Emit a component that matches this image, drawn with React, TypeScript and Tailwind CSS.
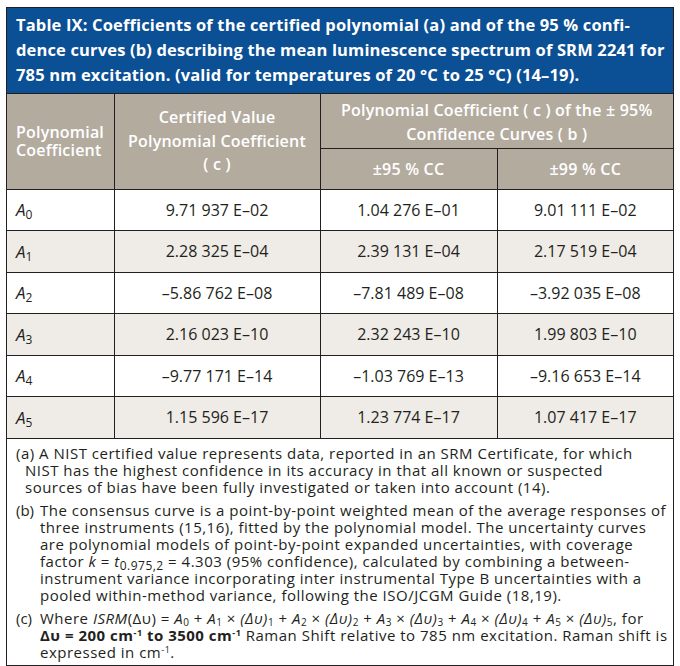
import React from 'react';

const rows = [
  { k: '0', a: '9.71 937 E–02', b: '1.04 276 E–01', c: '9.01 111 E–02' },
  { k: '1', a: '2.28 325 E–04', b: '2.39 131 E–04', c: '2.17 519 E–04' },
  { k: '2', a: '–5.86 762 E–08', b: '–7.81 489 E–08', c: '–3.92 035 E–08' },
  { k: '3', a: '2.16 023 E–10', b: '2.32 243 E–10', c: '1.99 803 E–10' },
  { k: '4', a: '–9.77 171 E–14', b: '–1.03 769 E–13', c: '–9.16 653 E–14' },
  { k: '5', a: '1.15 596 E–17', b: '1.23 774 E–17', c: '1.07 417 E–17' },
];

function Term({ n, last }: { n: number; last?: boolean }) {
  return (
    <>
      {' + '}
      <i>A</i>
      <sub className="text-[10px]">{n}</sub> × <i>(Δυ)</i>
      <sub className="text-[10px]">{n}</sub>
      {last ? ', ' : ''}
    </>
  );
}

export default function App() {
  return (
    <div className="bg-white w-[680px] h-[666px] pt-[7px] pl-[6px]" style={{ fontFamily: '"Open Sans", "Noto Sans", sans-serif' }}>
      <div className="w-[668px] border border-[#231f20] text-[#231f20]">
        <div className="bg-[#0b4f94] text-white font-bold text-[16.5px] tracking-[0.15px] leading-[25px] px-[9px] pt-[4px] h-[86px] whitespace-nowrap border-b border-[#231f20]">
          Table IX: Coefficients of the certified polynomial (a) and of the 95 % confi-<br />
          dence curves (b) describing the mean luminescence spectrum of SRM 2241 for<br />
          785 nm excitation. (valid for temperatures of 20 °C to 25 °C) (14–19).
        </div>

        <table className="w-full table-fixed border-collapse">
          <colgroup>
            <col className="w-[107px]" />
            <col className="w-[206px]" />
            <col className="w-[177px]" />
            <col />
          </colgroup>
          <thead className="bg-[#b4ab9f] text-white text-[16px] tracking-[0.2px]">
            <tr className="h-[54px]">
              <th rowSpan={2} className="text-left pl-[9px] leading-[18px] font-semibold border-r border-b border-[#231f20]">
                Polynomial<br />Coefficient
              </th>
              <th rowSpan={2} className="leading-[23.5px] font-semibold border-r border-b border-[#231f20]">
                Certified Value<br />Polynomial Coefficient<br />( c )
              </th>
              <th colSpan={2} className="leading-[24px] font-semibold border-b border-[#231f20] pt-[2px]">
                Polynomial Coefficient ( c ) of the ± 95%<br />Confidence Curves ( b )
              </th>
            </tr>
            <tr className="h-[41px]">
              <th className="font-semibold border-r border-b border-[#231f20]">±95 % CC</th>
              <th className="font-semibold border-b border-[#231f20]">±99 % CC</th>
            </tr>
          </thead>
          <tbody className="text-[16px]">
            {rows.map((r, i) => (
              <tr key={r.k} className={`h-[41.5px] ${i % 2 === 1 ? 'bg-[#efebe6]' : 'bg-white'}`}>
                <td className="pl-[9px] border-r border-b border-[#231f20]">
                  <i className="text-[17px]">A</i>
                  <sub className="text-[12px]">{r.k}</sub>
                </td>
                <td className="text-center border-r border-b border-[#231f20]">{r.a}</td>
                <td className="text-center border-r border-b border-[#231f20]">{r.b}</td>
                <td className="text-center border-b border-[#231f20]">{r.c}</td>
              </tr>
            ))}
          </tbody>
        </table>

        <div className="px-[9px] pt-[6px] pb-[4px] text-[15px] tracking-[0.5px] leading-[17px] whitespace-nowrap flex flex-col gap-[6px]">
          <p className="pl-[9px] [text-indent:-9px]">
            (a) A NIST certified value represents data, reported in an SRM Certificate, for which<br />
            NIST has the highest confidence in its accuracy in that all known or suspected<br />
            sources of bias have been fully investigated or taken into account (14).
          </p>
          <div className="flex">
            <span className="w-[24px] shrink-0 tracking-normal">(b)</span>
            <p>
              The consensus curve is a point-by-point weighted mean of the average responses of<br />
              three instruments (15,16), fitted by the polynomial model. The uncertainty curves<br />
              are polynomial models of point-by-point expanded uncertainties, with coverage<br />
              factor <i>k</i> = <i>t</i>
              <sub className="text-[12px]">0.975,2</sub> = 4.303 (95% confidence), calculated by combining a between-<br />
              instrument variance incorporating inter instrumental Type B uncertainties with a<br />
              pooled within-method variance, following the ISO/JCGM Guide (18,19).
            </p>
          </div>
          <div className="flex">
            <span className="w-[24px] shrink-0 tracking-normal">(c)</span>
            <p>
              Where <i>ISRM</i>(Δυ) = <i>A</i>
              <sub className="text-[10px]">0</sub>
              <Term n={1} />
              <Term n={2} />
              <Term n={3} />
              <Term n={4} />
              <Term n={5} last />
              for<br />
              <b>Δυ = 200 cm<sup className="text-[9px]">-1</sup> to 3500 cm<sup className="text-[9px]">-1</sup></b> Raman Shift relative to 785 nm excitation. Raman shift is<br />
              expressed in cm<sup className="text-[9px]">-1</sup>.
            </p>
          </div>
        </div>
      </div>
    </div>
  );
}
